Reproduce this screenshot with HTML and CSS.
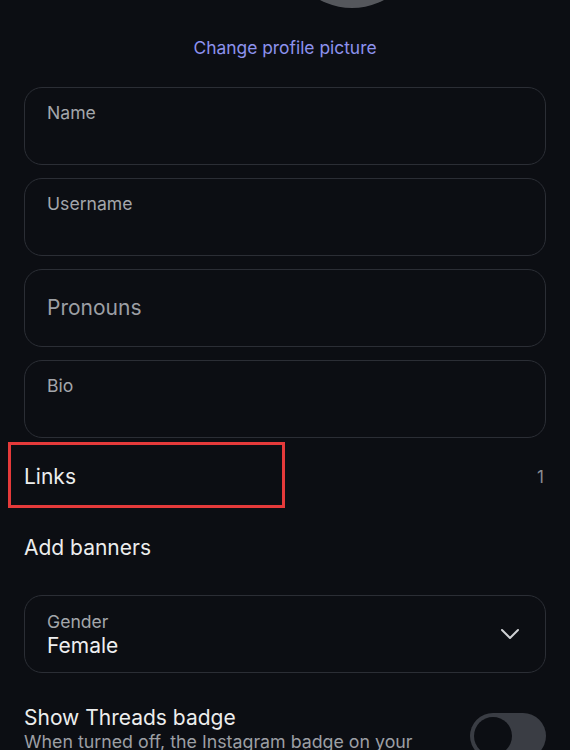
FILE: index.html
```html
<!DOCTYPE html>
<html lang="en">
<head>
<meta charset="utf-8">
<title>Edit profile</title>
<link rel="stylesheet" href="styles.css">
</head>
<body>
<div class="page">
  <div class="avatar-wrap"><div class="avatar"></div></div>
  <div class="change-pic">Change profile picture</div>

  <div class="fields">
    <div class="field"><span class="label">Name</span></div>
    <div class="field"><span class="label">Username</span></div>
    <div class="field field-empty"><span class="placeholder">Pronouns</span></div>
    <div class="field"><span class="label">Bio</span></div>
  </div>

  <div class="row row-links">
    <span class="row-title">Links</span>
    <span class="row-count">1</span>
    <div class="highlight"></div>
  </div>
  <div class="row">
    <span class="row-title">Add banners</span>
  </div>

  <div class="field select">
    <div class="select-text">
      <span class="label">Gender</span>
      <span class="value">Female</span>
    </div>
    <svg class="chevron" width="20" height="12" viewBox="0 0 20 12" aria-hidden="true">
      <path d="M2 2 L10 10 L18 2" fill="none" stroke="#cfd1d4" stroke-width="2" stroke-linecap="round" stroke-linejoin="round"/>
    </svg>
  </div>

  <div class="toggle-row">
    <div class="toggle-text">
      <div class="toggle-title">Show Threads badge</div>
      <div class="toggle-sub">When turned off, the Instagram badge on your</div>
    </div>
    <div class="toggle"><div class="knob"></div></div>
  </div>
</div>
</body>
</html>
```

FILE: styles.css
```css
html, body {
  margin: 0;
  padding: 0;
  background: #0c0e13;
  overflow: hidden;
}

body {
  font-family: Inter, "Noto Sans", "Liberation Sans", sans-serif;
  color: #e9eaec;
}

.page {
  width: 570px;
  height: 750px;
  padding: 0 24px;
  box-sizing: border-box;
}

.avatar-wrap {
  display: flex;
  justify-content: center;
  padding-left: 134px;
}

.avatar {
  width: 136px;
  height: 136px;
  margin-top: -128px;
  border-radius: 50%;
  background: #55575c;
}

.change-pic {
  margin-top: 29px;
  text-align: center;
  font-size: 17.4px;
  line-height: 22px;
  color: #8d92ee;
}

.fields {
  margin-top: 28px;
  display: flex;
  flex-direction: column;
  gap: 13px;
}

.field {
  height: 78px;
  box-sizing: border-box;
  border: 1.5px solid #2b2e35;
  border-radius: 18px;
  padding: 14px 22px 0;
}

.label {
  display: block;
  font-size: 17.6px;
  line-height: 22px;
  color: #a3a6ab;
}

.field-empty {
  display: flex;
  align-items: center;
  padding-top: 0;
}

.placeholder {
  font-size: 21px;
  line-height: 26px;
  color: #9c9fa4;
}

.row {
  position: relative;
  height: 71px;
  display: flex;
  align-items: center;
  justify-content: space-between;
}

.row-links {
  margin-top: 3px;
}

.row-title {
  font-size: 21px;
  line-height: 26px;
  color: #eceded;
}

.row-count {
  font-size: 17px;
  color: #8a8d92;
  margin-right: 2px;
}

.highlight {
  position: absolute;
  left: -16px;
  top: 1px;
  width: 271px;
  height: 60px;
  border: 3px solid #e53a3a;
}

.select {
  margin-top: 12px;
  display: flex;
  align-items: flex-start;
  justify-content: space-between;
  padding-top: 15px;
  padding-right: 25px;
}

.select-text {
  display: flex;
  flex-direction: column;
  gap: 0;
}

.value {
  font-size: 21px;
  line-height: 26px;
  color: #eeeff0;
}

.chevron {
  margin-top: 17px;
}

.toggle-row {
  margin-top: 32px;
  display: flex;
  justify-content: space-between;
  align-items: flex-start;
}

.toggle-title {
  font-size: 21px;
  line-height: 26px;
  color: #eceded;
}

.toggle-sub {
  margin-top: 0;
  font-size: 17.8px;
  line-height: 22px;
  color: #9c9fa4;
}

.toggle {
  margin-top: 8px;
  width: 76px;
  height: 46px;
  border-radius: 23px;
  background: #3a3d44;
  display: flex;
  align-items: center;
  padding-left: 4px;
  box-sizing: border-box;
}

.knob {
  width: 38px;
  height: 38px;
  border-radius: 50%;
  background: #0c0e13;
}
```
